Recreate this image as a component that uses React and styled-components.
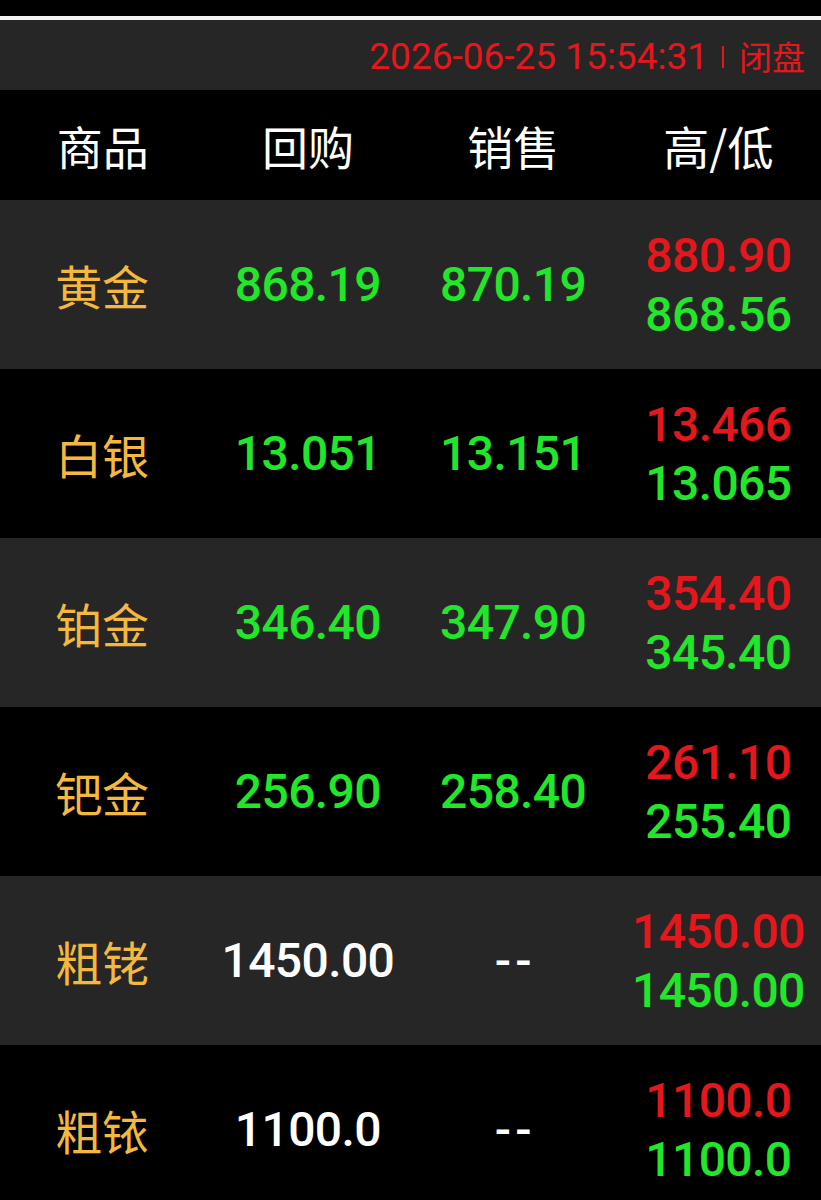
import React from 'react'
import styled, { createGlobalStyle } from 'styled-components'

const rows = [
  { name: '黄金', buy: '868.19', sell: '870.19', high: '880.90', low: '868.56', live: true },
  { name: '白银', buy: '13.051', sell: '13.151', high: '13.466', low: '13.065', live: true },
  { name: '铂金', buy: '346.40', sell: '347.90', high: '354.40', low: '345.40', live: true },
  { name: '钯金', buy: '256.90', sell: '258.40', high: '261.10', low: '255.40', live: true },
  { name: '粗铑', buy: '1450.00', sell: '--', high: '1450.00', low: '1450.00', live: false },
  { name: '粗铱', buy: '1100.0', sell: '--', high: '1100.0', low: '1100.0', live: false },
]

const GlobalStyle = createGlobalStyle`
  html, body {
    margin: 0;
    padding: 0;
    background: #000;
  }
  * {
    box-sizing: border-box;
  }
`

const Page = styled.div`
  width: 821px;
  height: 1200px;
  overflow: hidden;
  background: #000;
  font-family: Roboto, "Noto Sans CJK SC", sans-serif;
`

const TopStrip = styled.div`
  height: 20px;
  background: #000;
  border-bottom: 4px solid #f4f4f4;
`

const StatusBar = styled.div`
  height: 70px;
  background: #262626;
  display: flex;
  align-items: center;
  justify-content: flex-end;
  padding: 3px 16px 0 0;
  color: #e5171c;
  font-size: 37px;
  line-height: 1;
`

const Stamp = styled.span`
  font-family: Roboto, sans-serif;
`

const Divider = styled.span`
  width: 2px;
  height: 22px;
  background: #e5171c;
  margin: 0 15px 0 14px;
`

const State = styled.span`
  font-family: "Noto Sans CJK SC", sans-serif;
  font-size: 33px;
`

const Grid = styled.div`
  display: grid;
  grid-template-columns: repeat(4, 1fr);
  align-items: center;
  justify-items: center;
`

const Header = styled(Grid)`
  height: 110px;
  background: #000;
  color: #fff;
  font-family: "Noto Sans CJK SC", sans-serif;
  font-size: 46px;
`

const Row = styled(Grid)`
  height: 169px;
  background: ${p => (p.$odd ? '#000' : '#262626')};
`

const Name = styled.div`
  color: #f4b83e;
  font-family: "Noto Sans CJK SC", sans-serif;
  font-size: 47px;
  margin-left: -1px;
`

const Num = styled.div`
  font-family: Roboto, sans-serif;
  font-size: 48px;
  font-weight: 500;
  letter-spacing: -0.6px;
  color: ${p => p.$color};
`

const Dash = styled.div`
  color: #fff;
  font-family: Roboto, sans-serif;
  font-size: 48px;
  font-weight: 500;
  letter-spacing: 4px;
  margin-left: 4px;
`

const HighLow = styled.div`
  display: flex;
  flex-direction: column;
  align-items: center;
  line-height: 59px;
`

const GREEN = '#22e62a'
const RED = '#e5171c'

export default function App() {
  return (
    <Page>
      <GlobalStyle />
      <TopStrip />
      <StatusBar>
        <Stamp>2026-06-25 15:54:31</Stamp>
        <Divider />
        <State>闭盘</State>
      </StatusBar>
      <Header>
        <div>商品</div>
        <div>回购</div>
        <div>销售</div>
        <div>高/低</div>
      </Header>
      {rows.map((r, i) => (
        <Row key={r.name} $odd={i % 2 === 1}>
          <Name>{r.name}</Name>
          <Num $color={r.live ? GREEN : '#fff'}>{r.buy}</Num>
          {r.sell === '--' ? <Dash>--</Dash> : <Num $color={GREEN}>{r.sell}</Num>}
          <HighLow>
            <Num $color={RED}>{r.high}</Num>
            <Num $color={GREEN}>{r.low}</Num>
          </HighLow>
        </Row>
      ))}
    </Page>
  )
}
